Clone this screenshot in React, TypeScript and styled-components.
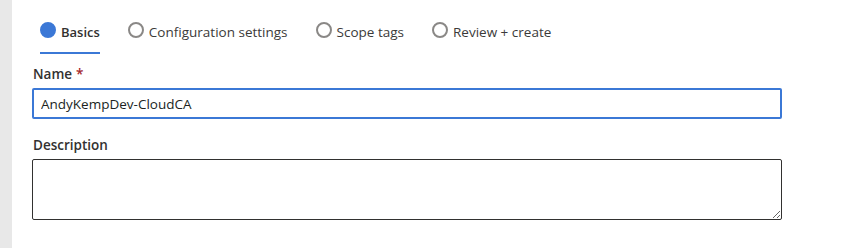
import React from "react";
import styled, { createGlobalStyle } from "styled-components";

const GlobalStyle = createGlobalStyle`
  html, body {
    margin: 0;
    padding: 0;
    background: #ffffff;
  }
  body {
    font-family: "Open Sans", "Noto Sans", sans-serif;
    color: #323130;
  }
`;

const Page = styled.div`
  display: flex;
  width: 854px;
  height: 248px;
  overflow: hidden;
`;

const Strip = styled.div`
  width: 12px;
  flex-shrink: 0;
  background: #e8e8e8;
`;

const Main = styled.div`
  flex: 1;
  padding: 0 72px 0 20px;
`;

const Tabs = styled.div`
  display: flex;
  gap: 28px;
  padding: 16px 0 0 8px;
`;

const Tab = styled.div<{ $active?: boolean }>`
  display: flex;
  align-items: center;
  gap: 5px;
  padding: 7px 0 11px;
  font-size: ${(p) => (p.$active ? "13px" : "13.5px")};
  font-weight: ${(p) => (p.$active ? 600 : 400)};
  color: ${(p) => (p.$active ? "#323130" : "#3b3a39")};
  border-bottom: 2px solid ${(p) => (p.$active ? "#3b78d6" : "transparent")};
  cursor: pointer;
`;

const Dot = styled.span<{ $active?: boolean }>`
  width: 16px;
  height: 16px;
  box-sizing: border-box;
  border-radius: 50%;
  flex-shrink: 0;
  margin-top: -5px;
  background: ${(p) => (p.$active ? "#3b78d6" : "#ffffff")};
  border: 2px solid ${(p) => (p.$active ? "#3b78d6" : "#8a8886")};
`;

const Field = styled.div<{ $top: number }>`
  display: flex;
  flex-direction: column;
  margin-top: ${(p) => p.$top}px;
`;

const Label = styled.label`
  font-size: 13.5px;
  font-weight: 600;
  line-height: 20px;
  color: #323130;
  padding-left: 1px;
  margin-bottom: 4px;
`;

const Required = styled.span`
  color: #a4262c;
  margin-left: 4px;
`;

const TextInput = styled.input`
  box-sizing: border-box;
  width: 750px;
  height: 31px;
  padding: 0 7px;
  border: 2px solid #3b78d6;
  border-radius: 2px;
  font-family: inherit;
  font-size: 13.5px;
  color: #201f1e;
  outline: none;
  caret-color: #000;
`;

const TextArea = styled.textarea`
  box-sizing: border-box;
  width: 750px;
  height: 61px;
  border: 1px solid #323130;
  border-radius: 2px;
  font-family: inherit;
  font-size: 13.5px;
  padding: 6px 8px;
  resize: vertical;
  outline: none;
`;

const steps = ["Basics", "Configuration settings", "Scope tags", "Review + create"];

export default function App() {
  return (
    <Page>
      <GlobalStyle />
      <Strip />
      <Main>
        <Tabs>
          {steps.map((s, i) => (
            <Tab key={s} $active={i === 0}>
              <Dot $active={i === 0} />
              {s}
            </Tab>
          ))}
        </Tabs>
        <Field $top={10}>
          <Label htmlFor="name">
            Name<Required>*</Required>
          </Label>
          <TextInput id="name" defaultValue="AndyKempDev-CloudCA" autoFocus />
        </Field>
        <Field $top={16}>
          <Label htmlFor="desc">Description</Label>
          <TextArea id="desc" />
        </Field>
      </Main>
    </Page>
  );
}
